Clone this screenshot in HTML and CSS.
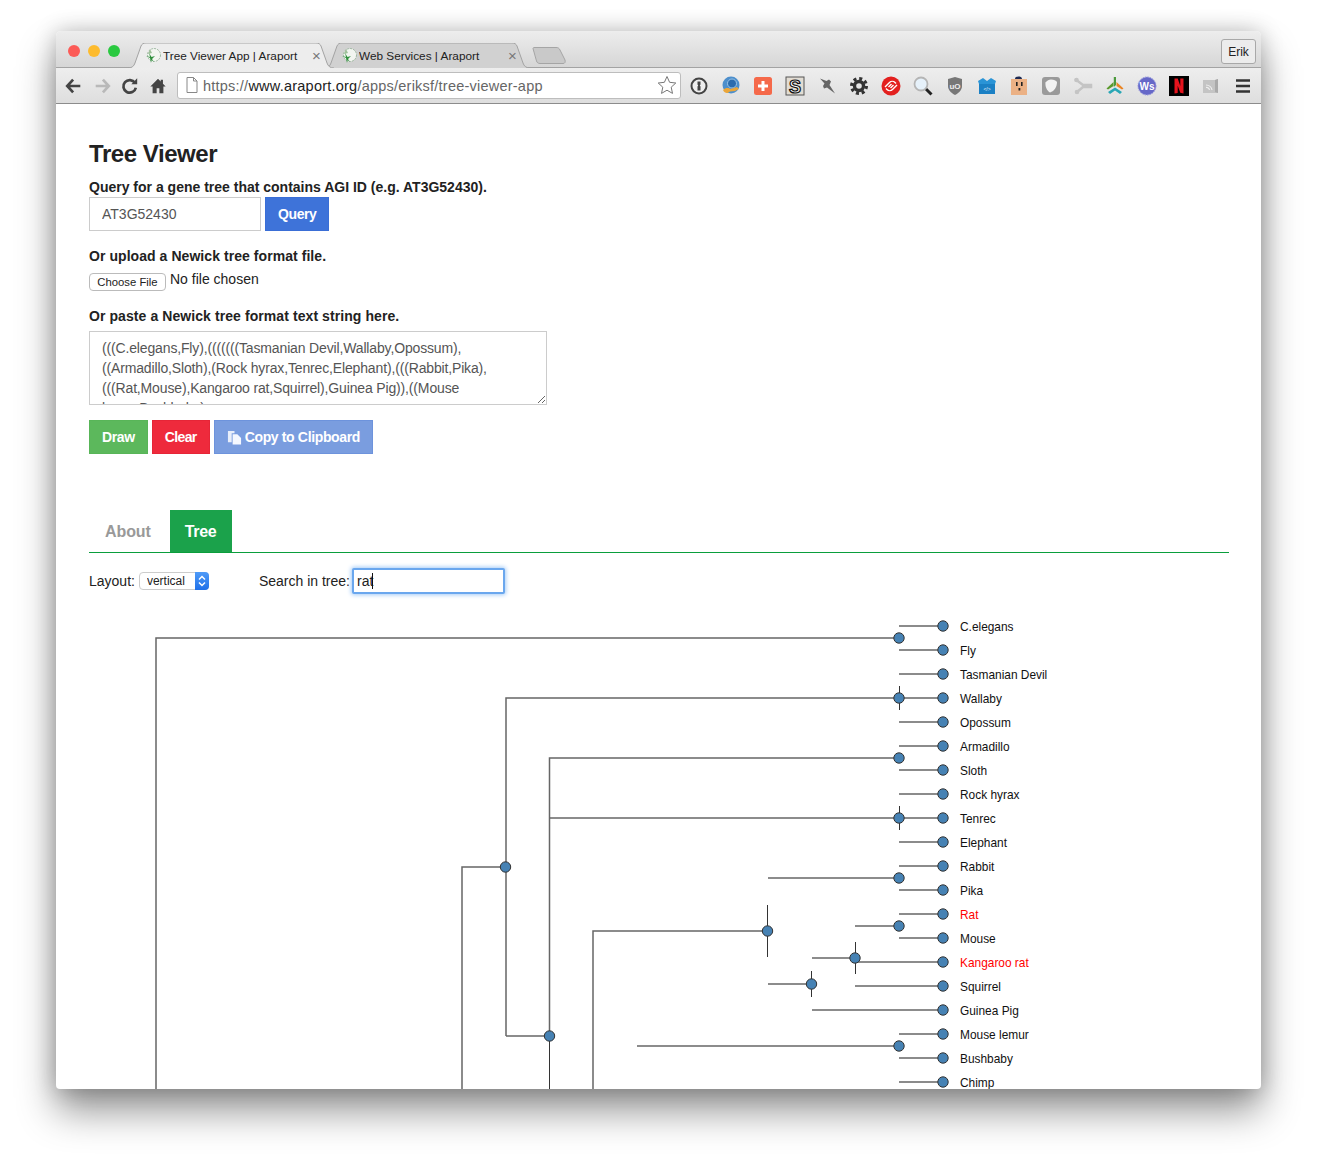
FILE: index.html
```html
<!DOCTYPE html>
<html lang="en">
<head>
    <meta charset="UTF-8">
    <title>Tree Viewer App | Araport</title>
    <link rel="stylesheet" href="styles.css">
</head>
<body>
    <svg class="defs" width="0" height="0">
        <symbol id="favicon" viewBox="0 0 16 16">
            <circle cx="9" cy="7" r="6.500" fill="#f2f5f0" stroke="#9db8a0" stroke-width="1" stroke-dasharray="2 1"/>
            <path d="M5 1 L7 5 L3 6 Z" fill="#9fc09a"/>
            <path d="M6 15 L5 10 L1 8 L5 9 L4 5 L6.500 9 L10 8 L7 11 L9 14 L6.500 12 Z" fill="#2f8f3c"/>
        </symbol>
    </svg>

    <div class="window">
        <div class="titlebar">
            <div class="lights">
                <span class="light light-red"></span>
                <span class="light light-yellow"></span>
                <span class="light light-green"></span>
            </div>
            <div class="tabs">
                <div class="tab tab-active">
                    <svg class="tab-shape" viewBox="0 0 206 25"><path d="M0 25 C4 25 6 23 7 20 L13 3 C14 1 15 0 18 0 H188 C191 0 192 1 193 3 L199 20 C200 23 202 25 206 25"/></svg>
                    <svg class="tab-icon"><use href="#favicon"/></svg>
                    <span class="tab-title">Tree Viewer App | Araport</span>
                    <span class="tab-close">×</span>
                </div>
                <div class="tab">
                    <svg class="tab-shape" viewBox="0 0 206 25"><path d="M0 25 C4 25 6 23 7 20 L13 3 C14 1 15 0 18 0 H188 C191 0 192 1 193 3 L199 20 C200 23 202 25 206 25"/></svg>
                    <svg class="tab-icon"><use href="#favicon"/></svg>
                    <span class="tab-title">Web Services | Araport</span>
                    <span class="tab-close">×</span>
                </div>
                <svg class="new-tab" viewBox="0 0 34 17"><path d="M1 1.500 C1 1 1.500 .5 2 .5 H24 C26 .5 27 1 28 3 L33 13 C33.500 15 33 16.500 31 16.500 H8 C6 16.500 5 15.500 4.500 14 Z"/></svg>
            </div>
            <button class="profile">Erik</button>
        </div>

        <div class="toolbar">
            <div class="nav-btns">
                <svg class="nav" viewBox="0 0 20 20"><path d="M9 3 L2.500 10 L9 17 M3 10 H17" fill="none" stroke="#444" stroke-width="3"/></svg>
                <svg class="nav" viewBox="0 0 20 20"><path d="M11 3 L17.500 10 L11 17 M17 10 H3" fill="none" stroke="#b9b9b9" stroke-width="3"/></svg>
                <svg class="nav" viewBox="0 0 20 20"><path d="M15.500 6.500 A7 7 0 1 0 16.500 12" fill="none" stroke="#444" stroke-width="3"/><path d="M11.500 8 H18 V1.500 Z" fill="#444"/></svg>
                <svg class="nav" viewBox="0 0 20 20"><path d="M10 2 L1.500 10.500 H4 V18 H8.500 V12.500 H11.500 V18 H16 V10.500 H18.500 L15.500 7.500 V3 H13 V5 Z" fill="#444"/></svg>
            </div>
            <div class="omnibox">
                <svg class="page-icon" viewBox="0 0 12 16"><path d="M1 .5 H7.500 L11 4 V15.500 H1 Z M7.500 .5 V4 H11" fill="#fff" stroke="#888"/></svg>
                <span class="url">https://<b>www.araport.org</b>/apps/eriksf/tree-viewer-app</span>
                <svg class="star" viewBox="0 0 20 20"><path d="M10 1.500 L12.600 7.300 L18.800 8 L14.200 12.200 L15.500 18.400 L10 15.200 L4.500 18.400 L5.800 12.200 L1.200 8 L7.400 7.300 Z" fill="#fff" stroke="#777"/></svg>
            </div>
            <div class="extensions">
                <svg class="ext" viewBox="0 0 20 20"><circle cx="10" cy="10" r="7.500" fill="#eee" stroke="#444" stroke-width="2"/><path d="M8.500 5.500 H11.500 V8.500 L10.800 9.500 L11.500 10.500 V14.500 H8.500 V10.500 L9.200 9.500 L8.500 8.500 Z" fill="#444"/></svg>
                <svg class="ext" viewBox="0 0 20 20"><circle cx="10" cy="9" r="8.500" fill="#4d8fcc"/><circle cx="11" cy="7.500" r="4.500" fill="#2b6cae" stroke="#9cc6e8"/><path d="M2 14 C5 11 8 12 9.500 13 L16 11 L18 13 L14 15 L9 15.500 C7 17.500 4 18 2 14 Z" fill="#eaa63a"/></svg>
                <svg class="ext" viewBox="0 0 20 20"><rect x="1" y="1" width="18" height="18" rx="2.500" fill="#f5694a"/><path d="M10 5 V15 M5 10 H15" stroke="#fff" stroke-width="3"/></svg>
                <svg class="ext" viewBox="0 0 20 20"><rect x="1" y="1" width="18" height="18" fill="#e2ddd4" stroke="#555"/><text class="ext-s" x="10" y="16.500">S</text></svg>
                <svg class="ext" viewBox="0 0 20 20"><path d="M3 2.500 L9.500 5 L12 3.500 L14 5.500 L12.500 9 L18 17.500 L10 11.500 L7 12.500 L6 10 L7.500 7.500 Z" fill="#666"/></svg>
                <svg class="ext" viewBox="0 0 20 20"><circle cx="10" cy="10" r="7.400" fill="none" stroke="#333" stroke-width="3.200" stroke-dasharray="3 2.810"/><circle cx="10" cy="10" r="4.500" fill="none" stroke="#333" stroke-width="3.400"/></svg>
                <svg class="ext" viewBox="0 0 20 20"><circle cx="10" cy="10" r="9.500" fill="#e3201f"/><path d="M4 11 L8.500 6.500 C10 5 12.500 5 14 6.500 L15 7.500 M16 9 L11.500 13.500 C10 15 7.500 15 6 13.500 L5 12.500 M7.500 11 L10.500 8 M12.500 9 L9.500 12" fill="none" stroke="#fff" stroke-width="1.400"/></svg>
                <svg class="ext" viewBox="0 0 20 20"><path d="M12.500 12.500 L18.500 18.500" stroke="#222" stroke-width="3"/><circle cx="8" cy="8" r="6.500" fill="#e6f1fa" stroke="#b5b5b5" stroke-width="1.800"/></svg>
                <svg class="ext" viewBox="0 0 20 20"><path d="M10 1 L17 3 V10 C17 14 14 17 10 19 C6 17 3 14 3 10 V3 Z" fill="#777"/><text class="ext-uo" x="10" y="12.500">uO</text></svg>
                <svg class="ext" viewBox="0 0 20 20"><path d="M2 7 H18 V18 H2 Z" fill="#1b80c4"/><path d="M1 5 L6 2 L10 5 L14 2 L19 5 L18 8 H2 Z" fill="#2a94d6"/><text class="ext-code" x="10" y="14.500">&lt;/&gt;</text></svg>
                <svg class="ext" viewBox="0 0 20 20"><rect x="2" y="3" width="16" height="16" fill="#ebb185"/><path d="M6 3 C6 1 8 .5 9.500 .5 C11 .5 13 1 13 3 Z" fill="#1f2a52"/><rect x="7" y="6" width="1.600" height="4" fill="#222"/><rect x="12" y="6" width="1.600" height="4" fill="#222"/><rect x="9.500" y="12" width="1.800" height="2.500" fill="#222"/></svg>
                <svg class="ext" viewBox="0 0 20 20"><rect x="1" y="1" width="18" height="18" rx="3" fill="#9a9a9a"/><path d="M10 3.500 C13 3.500 15 4.500 16 6 C16 11 13.500 15 9 16.500 C5.500 14.500 4 10 4.500 6.500 C6 4.500 8 3.500 10 3.500 Z" fill="#f2f2f2"/></svg>
                <svg class="ext" viewBox="0 0 20 20"><path d="M2 3 L10 9 H18 V11 H10 L4 16" fill="none" stroke="#c4c4c4" stroke-width="2.500"/><circle cx="3.500" cy="4" r="2.300" fill="#c4c4c4"/><circle cx="4" cy="16" r="2.300" fill="#c4c4c4"/></svg>
                <svg class="ext" viewBox="0 0 20 20"><path d="M8.800 1 H11 V9 L8.800 11 Z" fill="#4b9a3c"/><path d="M11.500 6 L18.500 12.500 L17 13.500 L11.500 10 Z" fill="#ea8422"/><path d="M8.500 6 L1.500 12.500 L3 13.500 L8.500 10 Z" fill="#5a9a2c"/><path d="M10 11.500 L17 16 L15 18 L10 14.500 L5 18 L3 16 Z" fill="#28a7b5"/></svg>
                <svg class="ext" viewBox="0 0 20 20"><circle cx="10" cy="10" r="9" fill="#6668c8" stroke="#8f90da" stroke-dasharray="1.500 1"/><text class="ext-ws" x="10" y="13.500">Ws</text></svg>
                <svg class="ext" viewBox="0 0 20 20"><rect x="0" y="0" width="20" height="20" fill="#000"/><path d="M5.500 2.500 H8.700 L11.300 10 V2.500 H14.500 V17.500 L11.300 16.800 L8.700 9.800 V17 L5.500 17.500 Z" fill="#e5131d"/></svg>
                <svg class="ext" viewBox="0 0 20 20"><path d="M2 4 H14 L17 3 V17 H2 Z" fill="#c4c4c4"/><path d="M14 4 L17 3 V17 L14 16 Z" fill="#aaa"/><path d="M5 9 A6 6 0 0 1 11 14 M5 11.500 A3 3 0 0 1 8.500 14" fill="none" stroke="#eee" stroke-width="1.200"/></svg>
                <svg class="ext" viewBox="0 0 20 20"><path d="M3 4.500 H17 M3 10 H17 M3 15.500 H17" stroke="#333" stroke-width="2.600"/></svg>
            </div>
        </div>

        <div class="page">
            <h1>Tree Viewer</h1>
            <label class="form-label" for="agi">Query for a gene tree that contains AGI ID (e.g. AT3G52430).</label>
            <div class="query-row">
                <input class="text-input" id="agi" type="text" value="AT3G52430">
                <button class="btn btn-blue">Query</button>
            </div>

            <label class="form-label upload-label">Or upload a Newick tree format file.</label>
            <div class="file-row">
                <button class="file-btn">Choose File</button>
                <span class="file-name">No file chosen</span>
            </div>

            <label class="form-label paste-label" for="newick">Or paste a Newick tree format text string here.</label>
            <textarea class="newick" id="newick" readonly>(((C.elegans,Fly),(((((((Tasmanian Devil,Wallaby,Opossum),((Armadillo,Sloth),(Rock hyrax,Tenrec,Elephant),(((Rabbit,Pika),(((Rat,Mouse),Kangaroo rat,Squirrel),Guinea Pig)),((Mouse lemur,Bushbaby),((((((Chimp,Human),Gorilla),Orangutan),Rhesus),Marmoset),Tarsier))))</textarea>
            <div class="btn-row">
                <button class="btn btn-green">Draw</button>
                <button class="btn btn-red">Clear</button>
                <button class="btn btn-light">
                    <svg class="copy-icon" viewBox="0 0 16 16"><path d="M1 1 H8 V3.500 H5 V13 H1 Z" fill="#e8eefa"/><path d="M6 4.500 H11 L15 8.500 V15.500 H6 Z" fill="#f5f8ff"/></svg>
                    Copy to Clipboard
                </button>
            </div>

            <div class="nav-tabs">
                <a class="nav-tab nav-tab-about">About</a>
                <a class="nav-tab nav-tab-on">Tree</a>
            </div>

            <div class="controls">
                <span class="control-label">Layout:</span>
                <span class="select-wrap">
                    <select class="layout-select">
                        <option>vertical</option>
                        <option>circular</option>
                    </select>
                    <span class="select-arrows"><svg viewBox="0 0 14 18"><path d="M4 7.500 L7 4.500 L10 7.500 M4 10.500 L7 13.500 L10 10.500" fill="none" stroke="#fff" stroke-width="1.500"/></svg></span>
                </span>
                <span class="control-label search-label">Search in tree:</span>
                <span class="search-wrap">
                    <input class="search-input" type="text" value="rat">
                    <span class="caret"></span>
                </span>
            </div>

            <!-- viewBox uses window coordinates, the leaves are 24px apart -->
            <svg class="tree" viewBox="89 604 1140 485" width="1140" height="485">
                <g class="links">
                    <path d="M156 1090 V638 H899"/>
                    <path d="M462 1090 V867 H505"/>
                    <path d="M506 1036 V698 H899"/>
                    <path d="M506 1036 H549"/>
                    <path d="M549.500 1036 V758 H899"/>
                    <path d="M549 818 H899"/>
                    <path d="M593 1090 V931 H767"/>
                    <path d="M637 1046 H899"/>
                    <path d="M768 878 H899"/>
                    <path d="M812 958 H855"/>
                    <path d="M855 926 H899"/>
                    <path d="M768 984 H811"/>
                    <path d="M812 1010 H943"/>
                    <path d="M855 962 H943"/>
                    <path d="M855 986 H943"/>
                    <path d="M899 626 H943 M899 650 H943 M899 674 H943 M899 698 H943 M899 722 H943"/>
                    <path d="M899 746 H943 M899 770 H943 M899 794 H943 M899 818 H943 M899 842 H943"/>
                    <path d="M899 866 H943 M899 890 H943 M899 914 H943 M899 938 H943"/>
                    <path d="M899 1034 H943 M899 1058 H943 M899 1082 H943"/>
                </g>
                <g class="links-dark">
                    <path d="M549.500 1036 V1090"/>
                    <path d="M767.500 905 V957"/>
                    <path d="M855.500 942 V974"/>
                    <path d="M811.500 971 V997"/>
                    <path d="M899.500 686 V710 M899.500 806 V830"/>
                </g>
                <g class="nodes">
                    <circle cx="899" cy="638" r="5.200"/><circle cx="899" cy="698" r="5.200"/><circle cx="899" cy="758" r="5.200"/>
                    <circle cx="899" cy="818" r="5.200"/><circle cx="899" cy="878" r="5.200"/><circle cx="899" cy="926" r="5.200"/>
                    <circle cx="855" cy="958" r="5.200"/><circle cx="811.500" cy="984" r="5.200"/><circle cx="767.500" cy="931" r="5.200"/>
                    <circle cx="505.500" cy="867" r="5.200"/><circle cx="549.500" cy="1036" r="5.200"/><circle cx="899" cy="1046" r="5.200"/>
                    <circle cx="943" cy="626" r="5.200"/><circle cx="943" cy="650" r="5.200"/><circle cx="943" cy="674" r="5.200"/>
                    <circle cx="943" cy="698" r="5.200"/><circle cx="943" cy="722" r="5.200"/><circle cx="943" cy="746" r="5.200"/>
                    <circle cx="943" cy="770" r="5.200"/><circle cx="943" cy="794" r="5.200"/><circle cx="943" cy="818" r="5.200"/>
                    <circle cx="943" cy="842" r="5.200"/><circle cx="943" cy="866" r="5.200"/><circle cx="943" cy="890" r="5.200"/>
                    <circle cx="943" cy="914" r="5.200"/><circle cx="943" cy="938" r="5.200"/><circle cx="943" cy="962" r="5.200"/>
                    <circle cx="943" cy="986" r="5.200"/><circle cx="943" cy="1010" r="5.200"/><circle cx="943" cy="1034" r="5.200"/>
                    <circle cx="943" cy="1058" r="5.200"/><circle cx="943" cy="1082" r="5.200"/>
                </g>
                <g class="labels">
                    <text x="960" y="631">C.elegans</text>
                    <text x="960" y="655">Fly</text>
                    <text x="960" y="679">Tasmanian Devil</text>
                    <text x="960" y="703">Wallaby</text>
                    <text x="960" y="727">Opossum</text>
                    <text x="960" y="751">Armadillo</text>
                    <text x="960" y="775">Sloth</text>
                    <text x="960" y="799">Rock hyrax</text>
                    <text x="960" y="823">Tenrec</text>
                    <text x="960" y="847">Elephant</text>
                    <text x="960" y="871">Rabbit</text>
                    <text x="960" y="895">Pika</text>
                    <text class="match" x="960" y="919">Rat</text>
                    <text x="960" y="943">Mouse</text>
                    <text class="match" x="960" y="967">Kangaroo rat</text>
                    <text x="960" y="991">Squirrel</text>
                    <text x="960" y="1015">Guinea Pig</text>
                    <text x="960" y="1039">Mouse lemur</text>
                    <text x="960" y="1063">Bushbaby</text>
                    <text x="960" y="1087">Chimp</text>
                </g>
            </svg>
        </div>
    </div>
</body>
</html>
```

FILE: styles.css
```css
/* General Reset */
* {
    margin: 0;
    padding: 0;
    box-sizing: border-box;
    font-family: 'Liberation Sans', Arial, sans-serif;
}

body {
    background: #fff;
    width: 1317px;
    height: 1169px;
    padding: 31px 56px 0;
    overflow: hidden;
}

.defs {
    display: block;
    height: 0;
}

/* Browser window */
.window {
    width: 1205px;
    height: 1058px;
    background: #fff;
    border-radius: 5px 5px 4px 4px;
    overflow: hidden;
    box-shadow: 0 22px 38px rgba(0, 0, 0, 0.42), 0 0 22px rgba(0, 0, 0, 0.22);
}

.titlebar {
    position: relative;
    display: flex;
    align-items: flex-end;
    height: 37px;
    background: linear-gradient(#ededed, #d6d6d6);
    border-bottom: 1px solid #a3a3a3;
}

.lights {
    display: flex;
    gap: 8px;
    align-self: flex-start;
    margin: 14px 0 0 12px;
}

.light {
    width: 12px;
    height: 12px;
    border-radius: 50%;
}

.light-red { background: #fc5b57; }
.light-yellow { background: #fdbb2e; }
.light-green { background: #2ac940; }

.tabs {
    display: flex;
    align-items: flex-end;
    margin: 0 0 -1px 8px;
}

.tab {
    position: relative;
    display: flex;
    align-items: center;
    width: 206px;
    height: 25px;
    margin-right: -10px;
    padding-left: 17px;
    font-size: 11.800px;
}

.tab-shape {
    position: absolute;
    left: 0;
    top: 0;
    width: 206px;
    height: 25px;
}

.tab-shape path {
    fill: #d1d1d1;
    stroke: #a3a3a3;
}

.tab-active {
    z-index: 1;
}

.tab-active .tab-shape path {
    fill: #ededed;
}

.tab-icon {
    position: relative;
    width: 16px;
    height: 16px;
    margin-top: 1px;
}

.tab-title {
    position: relative;
    margin-left: 2px;
    color: #222;
    white-space: nowrap;
    width: 149px;
    overflow: hidden;
}

.tab-close {
    position: relative;
    color: #777;
    font-size: 15px;
}

.new-tab {
    width: 34px;
    height: 17px;
    margin: 0 0 4px 12px;
}

.new-tab path {
    fill: #c9c9c9;
    stroke: #a5a5a5;
}

.profile {
    position: absolute;
    right: 5px;
    top: 8px;
    width: 35px;
    height: 25px;
    background: #ececec;
    border: 1px solid #a8a8a8;
    border-radius: 3px;
    font-size: 12px;
    color: #222;
}

.toolbar {
    display: flex;
    align-items: center;
    height: 36px;
    padding-left: 4px;
    background: linear-gradient(#eeeeee, #dedede);
    border-bottom: 1px solid #8c8c8c;
}

.nav-btns {
    display: flex;
}

.nav {
    width: 18px;
    height: 18px;
    margin: 0 5px;
}

.omnibox {
    display: flex;
    align-items: center;
    width: 504px;
    height: 27px;
    margin: -1px 2px 0 5px;
    padding: 0 3px 0 8px;
    background: #fff;
    border: 1px solid #bdbdbd;
    border-radius: 3px;
}

.page-icon {
    width: 12px;
    height: 16px;
}

.url {
    flex: 1;
    margin-left: 5px;
    padding-top: 1px;
    font-size: 14.500px;
    letter-spacing: 0.23px;
    color: #666;
    white-space: nowrap;
}

.url b {
    font-weight: 400;
    color: #222;
}

.star {
    width: 20px;
    height: 20px;
}

.extensions {
    display: flex;
}

.ext {
    width: 20px;
    height: 20px;
    margin: 0 6px;
}

.ext-s {
    font-size: 18px;
    font-weight: 700;
    text-anchor: middle;
    fill: #fff;
    stroke: #111;
    stroke-width: 1.200px;
}

.ext-uo {
    font-size: 8px;
    font-weight: 700;
    text-anchor: middle;
    fill: #eee;
}

.ext-code {
    font-size: 5px;
    text-anchor: middle;
    fill: #e8f3fa;
}

.ext-ws {
    font-size: 10px;
    font-weight: 700;
    text-anchor: middle;
    fill: #fff;
}

/* Page content */
.page {
    padding: 35px 32px 0 33px;
    color: #222;
}

h1 {
    height: 30px;
    margin-bottom: 8px;
    font-size: 24px;
    line-height: 30px;
    font-weight: 700;
    letter-spacing: -0.45px;
}

.form-label {
    display: block;
    height: 20px;
    font-size: 14px;
    line-height: 20px;
    font-weight: 700;
}

.query-row {
    display: flex;
    gap: 4px;
}

.text-input {
    width: 172px;
    height: 34px;
    padding: 0 12px;
    border: 1px solid #ccc;
    font-size: 14px;
    color: #555;
}

.btn {
    display: inline-flex;
    align-items: center;
    height: 34px;
    padding: 0 12px;
    border: 1px solid transparent;
    color: #fff;
    font-size: 14px;
    font-weight: 700;
    letter-spacing: -0.4px;
}

.btn-blue { background: #3e73d9; border-color: #3a6ed6; }
.btn-green { background: #5cb85c; border-color: #58b558; }
.btn-red { background: #ee2a3c; border-color: #e62537; letter-spacing: -0.6px; }
.btn-light { background: #7a9ddf; border-color: #6d93dc; letter-spacing: -0.35px; }

.upload-label {
    margin-top: 15px;
    letter-spacing: 0.06px;
}

.file-row {
    display: flex;
    align-items: flex-start;
    height: 36px;
    margin-top: 4px;
}

.file-btn {
    width: 77px;
    height: 18px;
    margin-top: 3px;
    background: #fff;
    border: 1px solid #bbb;
    border-radius: 4px;
    font-size: 11.300px;
    color: #222;
}

.file-name {
    margin-left: 4px;
    font-size: 14px;
    line-height: 18px;
}

.paste-label {
    letter-spacing: 0.08px;
}

.newick {
    display: block;
    width: 458px;
    height: 74px;
    margin-top: 5px;
    padding: 6px 12px;
    border: 1px solid #ccc;
    font-size: 14px;
    line-height: 20px;
    letter-spacing: -0.15px;
    color: #555;
    overflow: hidden;
}

.btn-row {
    display: flex;
    gap: 4px;
    margin-top: 15px;
}

.copy-icon {
    width: 15px;
    height: 15px;
    margin-right: 3px;
}

.nav-tabs {
    display: flex;
    height: 43px;
    margin-top: 56px;
    border-bottom: 1px solid #0a9e3c;
}

.nav-tab {
    height: 42px;
    padding: 0 15px;
    font-size: 16px;
    line-height: 44px;
    font-weight: 700;
    color: #999;
    letter-spacing: -0.3px;
}

.nav-tab-about {
    padding: 0 19px 0 16px;
    letter-spacing: -0.1px;
}

.nav-tab-on {
    width: 62px;
    background: #1ba24b;
    color: #fff;
}

.controls {
    display: flex;
    align-items: center;
    height: 28px;
    margin-top: 14px;
    font-size: 14px;
}

.select-wrap {
    position: relative;
    display: block;
    margin-left: 4px;
}

.layout-select {
    display: block;
    appearance: none;
    width: 70px;
    height: 18px;
    padding-left: 7px;
    background: #fff;
    border: 1px solid #ccc;
    border-radius: 4px;
    font-size: 12px;
    color: #222;
}

.select-arrows {
    position: absolute;
    right: 0;
    top: 0;
    width: 14px;
    height: 18px;
    background: linear-gradient(#4f9bf8, #1f70e8);
    border-radius: 0 4px 4px 0;
}

.select-arrows svg {
    display: block;
}

.search-label {
    margin-left: 50px;
}

.search-wrap {
    position: relative;
    display: block;
    margin-left: 2px;
}

.search-input {
    display: block;
    width: 153px;
    height: 26px;
    padding-left: 3px;
    border: 2px solid #6aa7ee;
    border-radius: 2px;
    box-shadow: 0 0 4px 1px #a3cbf7;
    font-size: 14px;
    color: #222;
    outline: none;
}

.caret {
    position: absolute;
    left: 20px;
    top: 5px;
    width: 1px;
    height: 16px;
    background: #111;
}

/* Tree */
.tree {
    display: block;
    margin-top: 9px;
}

.links path {
    fill: none;
    stroke: #666;
    stroke-width: 1.500;
}

.links-dark path {
    fill: none;
    stroke: #333;
    stroke-width: 1;
}

.nodes circle {
    fill: steelblue;
    stroke: #333;
    stroke-width: 1;
}

.labels text {
    font-size: 11.900px;
    fill: #111;
}

.labels .match {
    fill: #f00;
}
```
